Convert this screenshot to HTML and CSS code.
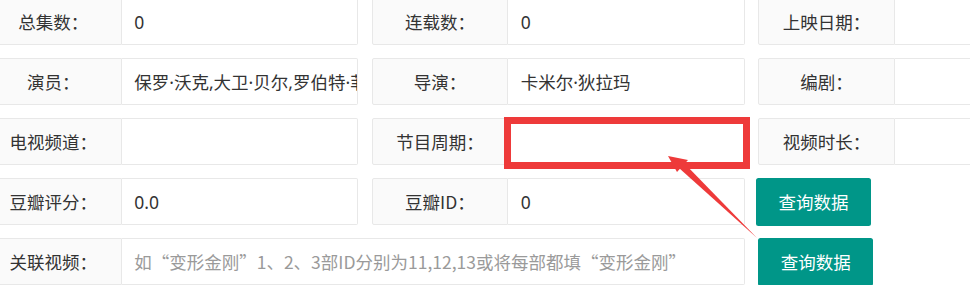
FILE: index.html
```html
<!DOCTYPE html>
<html lang="zh-CN">
<head>
<meta charset="utf-8">
<title>视频信息</title>
<link rel="stylesheet" href="styles.css">
</head>
<body>
<div class="form">
  <div class="row">
    <div class="item"><div class="label">总集数：</div><div class="field">0</div></div>
    <div class="item"><div class="label">连载数：</div><div class="field">0</div></div>
    <div class="item"><div class="label">上映日期：</div><div class="field"></div></div>
  </div>
  <div class="row">
    <div class="item"><div class="label">演员：</div><div class="field"><span class="clip">保罗·沃克,大卫·贝尔,罗伯特·菲尔德</span></div></div>
    <div class="item"><div class="label">导演：</div><div class="field">卡米尔·狄拉玛</div></div>
    <div class="item"><div class="label">编剧：</div><div class="field"></div></div>
  </div>
  <div class="row">
    <div class="item"><div class="label">电视频道：</div><div class="field"></div></div>
    <div class="item"><div class="label">节目周期：</div><div class="field marked"><span class="highlight"></span></div></div>
    <div class="item"><div class="label">视频时长：</div><div class="field"></div></div>
  </div>
  <div class="row">
    <div class="item"><div class="label">豆瓣评分：</div><div class="field">0.0</div></div>
    <div class="item"><div class="label">豆瓣ID：</div><div class="field">0</div></div>
    <button class="btn btn-shift">查询数据</button>
  </div>
  <div class="row">
    <div class="item wide"><div class="label">关联视频：</div><div class="field placeholder">如“变形金刚”1、2、3部ID分别为11,12,13或将每部都填“变形金刚”</div></div>
    <button class="btn">查询数据</button>
  </div>
</div>
<svg class="arrow" width="970" height="285" viewBox="0 0 970 285" aria-hidden="true">
  <polygon points="668,156 688,160 677,172" fill="#ee3a3a"/>
  <polygon points="684,163 679,168 757,238" fill="#ee3a3a"/>
</svg>
</body>
</html>
```

FILE: styles.css
```css
html, body {
  margin: 0;
  padding: 0;
  width: 970px;
  height: 285px;
  overflow: hidden;
  background: #fff;
}

body {
  position: relative;
  font-family: "Noto Sans CJK SC", "Microsoft YaHei", sans-serif;
  font-size: 17.5px;
  color: #333;
}

.form {
  margin-left: -15px;
  margin-top: -2px;
  width: 1200px;
}

.row {
  display: flex;
  gap: 13.3px;
  height: 47px;
  margin-bottom: 13px;
}

.item {
  display: flex;
  flex: none;
  width: 373.3px;
  height: 47px;
}

.item.wide {
  width: 760px;
}

.label {
  flex: none;
  box-sizing: border-box;
  width: 136.7px;
  height: 47px;
  display: flex;
  align-items: center;
  justify-content: center;
  background: #fafafa;
  border: 1px solid #e8e8e8;
  border-radius: 2px 0 0 2px;
  white-space: nowrap;
  color: #333;
}

.field {
  flex: 1;
  min-width: 0;
  box-sizing: border-box;
  height: 47px;
  display: flex;
  align-items: center;
  padding-left: 12.5px;
  background: #fff;
  border: 1px solid #e8e8e8;
  border-left: none;
  border-radius: 0 2px 2px 0;
  white-space: nowrap;
  overflow: hidden;
  font-family: "Noto Sans", "Noto Sans CJK SC", sans-serif;
  color: #333;
}

.clip {
  display: block;
  overflow: hidden;
  min-width: 0;
}

.field.placeholder {
  font-family: "Noto Sans CJK SC", sans-serif;
  color: #9a9a9a;
}

.field.marked {
  position: relative;
  overflow: visible;
}

.highlight {
  position: absolute;
  left: -4.5px;
  right: -6.5px;
  top: -2px;
  bottom: -5px;
  border: 7.5px solid #ee3a3a;
}

.btn {
  flex: none;
  height: 47.5px;
  padding: 0 22.5px;
  border: none;
  border-radius: 2.5px;
  background: #009688;
  color: #fff;
  font-family: inherit;
  font-size: 17.5px;
  line-height: 47.5px;
  white-space: nowrap;
}

.btn-shift {
  margin-left: -2.3px;
}

.arrow {
  position: absolute;
  left: 0;
  top: 0;
  pointer-events: none;
}
```
